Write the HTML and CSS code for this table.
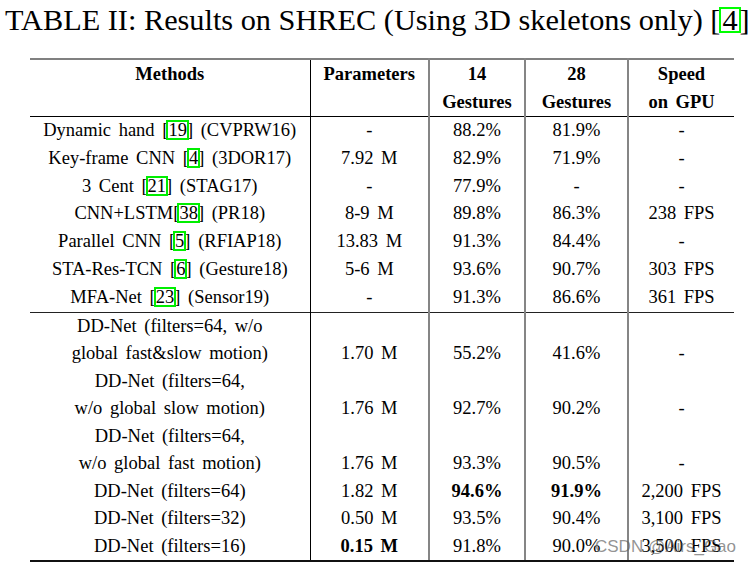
FILE: index.html
```html
<!DOCTYPE html>
<html>
<head>
<meta charset="utf-8">
<link rel="stylesheet" href="styles.css">
</head>
<body>
<div class="page">
  <div class="title">TABLE II: Results on SHREC (Using 3D skeletons only) [<span class="tcite">4</span>]</div>
  <table class="results">
    <colgroup>
      <col class="c1"><col class="c2"><col class="c3"><col class="c4"><col class="c5">
    </colgroup>
    <thead>
      <tr class="head">
        <th class="m">Methods</th>
        <th class="p">Parameters</th>
        <th class="g">14<br>Gestures</th>
        <th class="g">28<br>Gestures</th>
        <th class="s">Speed<br>on GPU</th>
      </tr>
    </thead>
    <tbody class="prior">
      <tr><td class="m">Dynamic hand [<span class="cite">19</span>] (CVPRW16)</td><td class="p">-</td><td class="g">88.2%</td><td class="g">81.9%</td><td class="s">-</td></tr>
      <tr><td class="m">Key-frame CNN [<span class="cite">4</span>] (3DOR17)</td><td class="p">7.92 M</td><td class="g">82.9%</td><td class="g">71.9%</td><td class="s">-</td></tr>
      <tr><td class="m">3 Cent [<span class="cite">21</span>] (STAG17)</td><td class="p">-</td><td class="g">77.9%</td><td class="g">-</td><td class="s">-</td></tr>
      <tr><td class="m">CNN+LSTM[<span class="cite">38</span>] (PR18)</td><td class="p">8-9 M</td><td class="g">89.8%</td><td class="g">86.3%</td><td class="s">238 FPS</td></tr>
      <tr><td class="m">Parallel CNN [<span class="cite">5</span>] (RFIAP18)</td><td class="p">13.83 M</td><td class="g">91.3%</td><td class="g">84.4%</td><td class="s">-</td></tr>
      <tr><td class="m">STA-Res-TCN [<span class="cite">6</span>] (Gesture18)</td><td class="p">5-6 M</td><td class="g">93.6%</td><td class="g">90.7%</td><td class="s">303 FPS</td></tr>
      <tr><td class="m">MFA-Net [<span class="cite">23</span>] (Sensor19)</td><td class="p">-</td><td class="g">91.3%</td><td class="g">86.6%</td><td class="s">361 FPS</td></tr>
    </tbody>
    <tbody class="ours">
      <tr class="first"><td class="m">DD-Net (filters=64, w/o<br>global fast&amp;slow motion)</td><td class="p">1.70 M</td><td class="g">55.2%</td><td class="g">41.6%</td><td class="s">-</td></tr>
      <tr><td class="m">DD-Net (filters=64,<br>w/o global slow motion)</td><td class="p">1.76 M</td><td class="g">92.7%</td><td class="g">90.2%</td><td class="s">-</td></tr>
      <tr><td class="m">DD-Net (filters=64,<br>w/o global fast motion)</td><td class="p">1.76 M</td><td class="g">93.3%</td><td class="g">90.5%</td><td class="s">-</td></tr>
      <tr><td class="m">DD-Net (filters=64)</td><td class="p">1.82 M</td><td class="g"><b>94.6%</b></td><td class="g"><b>91.9%</b></td><td class="s">2,200 FPS</td></tr>
      <tr><td class="m">DD-Net (filters=32)</td><td class="p">0.50 M</td><td class="g">93.5%</td><td class="g">90.4%</td><td class="s">3,100 FPS</td></tr>
      <tr class="last"><td class="m">DD-Net (filters=16)</td><td class="p"><b>0.15 M</b></td><td class="g">91.8%</td><td class="g">90.0%</td><td class="s">3,500 FPS</td></tr>
    </tbody>
  </table>
  <div class="watermark">CSDN @Airs_Gao</div>
</div>
</body>
</html>
```

FILE: styles.css
```css
html, body {
  margin: 0;
  padding: 0;
  background: #ffffff;
}

.page {
  position: relative;
  width: 753px;
  height: 567px;
  overflow: hidden;
  font-family: "Liberation Serif", "Times New Roman", serif;
  color: #000;
}

.title {
  font-family: "Liberation Serif", "Times New Roman", serif;
  font-size: 30.3px;
  line-height: 40px;
  padding-left: 5px;
  white-space: nowrap;
  height: 40px;
}

.tcite {
  display: inline-block;
  border: 2px solid #00ff00;
  line-height: 22px;
  padding: 0 1px;
  margin: 0 -1px;
}

.results {
  margin-top: 18px;
  margin-left: 30px;
  width: 704px;
  border-collapse: collapse;
  table-layout: fixed;
  font-family: "Liberation Serif", "Times New Roman", serif;
  font-size: 18.5px;
  word-spacing: 3px;
}

.c1 { width: 280px; }
.c2 { width: 119px; }
.c3 { width: 96px; }
.c4 { width: 103px; }
.c5 { width: 106px; }

.results th,
.results td {
  padding: 0;
  text-align: center;
  white-space: nowrap;
  line-height: 27.8px;
  vertical-align: bottom;
  font-family: "Liberation Serif", "Times New Roman", serif;
}

.results th {
  font-weight: bold;
  vertical-align: top;
  line-height: 28px;
}

.head th {
  border-top: 2px solid #808080;
  border-bottom: 1px solid #000;
}

.results .m {
  border-right: 1px solid #000;
}

.results .p,
.results .g {
  border-right: 2px solid #858585;
}

.ours td {
  line-height: 27.5px;
}

.ours .first td {
  border-top: 1px solid #222;
}

.ours .last td {
  border-bottom: 2px solid #111;
}

.cite {
  outline: 2px solid #00ee00;
  outline-offset: -2px;
  padding: 0 2px;
  margin: 0 -2px;
  word-spacing: 0;
}

.watermark {
  position: absolute;
  left: 595px;
  top: 537px;
  font-family: "Liberation Sans", Arial, sans-serif;
  font-size: 17px;
  line-height: 20px;
  color: rgba(100, 100, 100, 0.7);
  white-space: nowrap;
}
```
